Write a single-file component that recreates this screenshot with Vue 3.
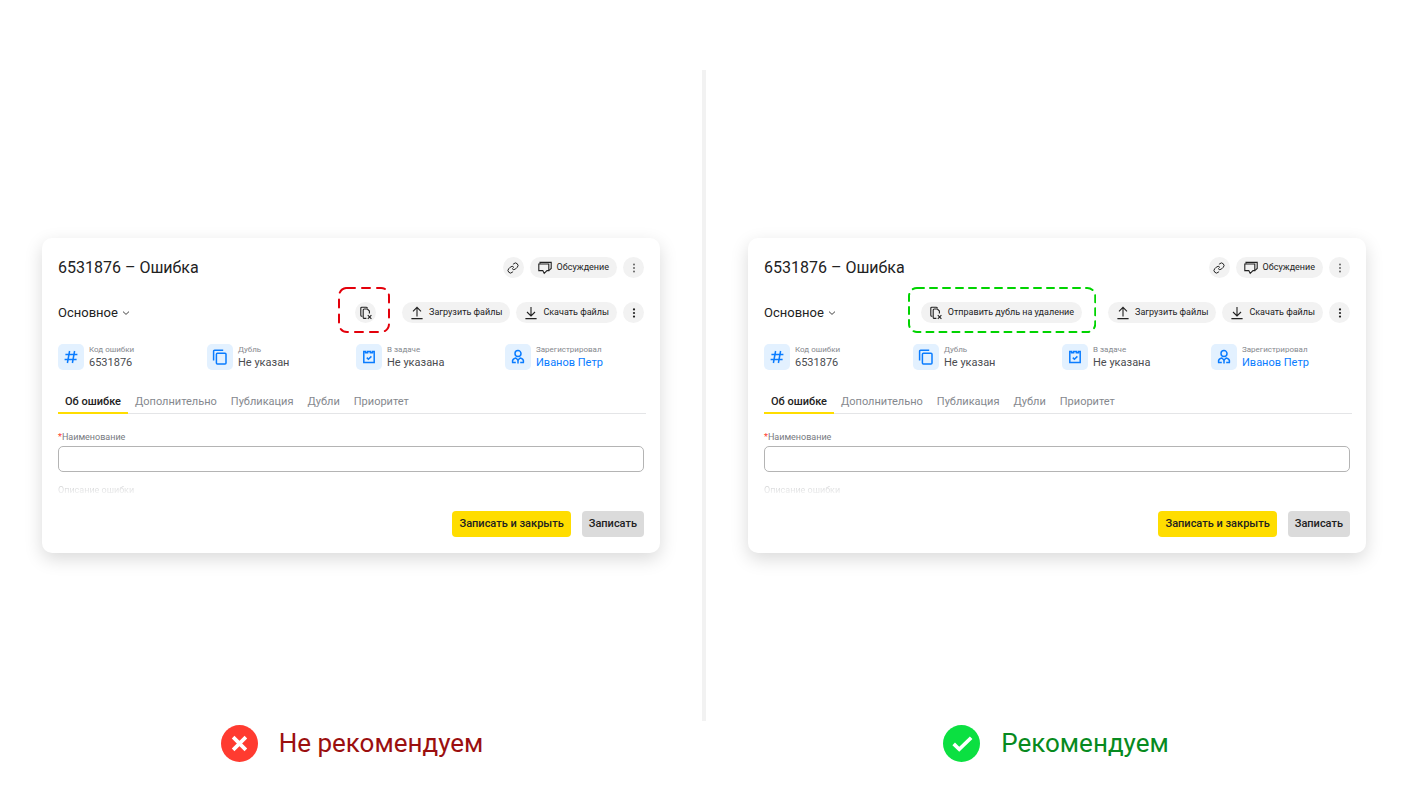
<template>
	<main class="page">
		<section v-for="panel in panels" :key="panel.id" class="column" :class="panel.id">
			<div class="stage">
				<article class="card">
					<header class="row">
						<h1 class="title">6531876 – Ошибка</h1>
						<div class="actions">
							<button class="pill pill-icon" aria-label="Скопировать ссылку">
								<svg class="icon icon-link" viewBox="0 0 24 24">
									<path d="M10 13a5 5 0 0 0 7.54.54l3-3a5 5 0 0 0-7.07-7.07l-1.72 1.71" />
									<path d="M14 11a5 5 0 0 0-7.54-.54l-3 3a5 5 0 0 0 7.07 7.07l1.71-1.71" />
								</svg>
							</button>
							<button class="pill">
								<svg class="icon" viewBox="0 0 14 14">
									<path d="M.8 3h10v6.6H9l-2.8 2.8-1.4-2.8h-4z" />
									<path d="M2 2.8V1.4h11.2v6l-2.2 2" />
								</svg>
								Обсуждение
							</button>
							<button class="pill pill-icon soft" aria-label="Ещё">
								<svg class="icon dots" viewBox="0 0 14 14">
									<circle cx="7" cy="3.4" r="1" /><circle cx="7" cy="7" r="1" /><circle cx="7" cy="10.6" r="1" />
								</svg>
							</button>
						</div>
					</header>

					<div class="row row-tools">
						<button class="section-select">
							Основное
							<svg class="chevron" viewBox="0 0 8 8"><path d="M1 2.6l3 2.8 3-2.8" /></svg>
						</button>
						<div class="actions">
							<div class="marked">
								<button class="pill" :class="{ 'pill-icon': !panel.action }" aria-label="Отправить дубль на удаление">
									<svg class="icon" viewBox="0 0 14 14">
										<path d="M3.4 10.200h-.6a1 1 0 0 1-1-1V2.200a1 1 0 0 1 1-1h4.600a1 1 0 0 1 1 1" />
										<path d="M7.400 12.400H5.200a1 1 0 0 1-1-1V4a1 1 0 0 1 1-1h3.200l2 2v2.600" />
										<path d="M8.800 9.200l3.600 3.600M12.400 9.200l-3.600 3.600" />
									</svg>
									<template v-if="panel.action">{{ panel.action }}</template>
								</button>
								<svg class="outline" aria-hidden="true"><rect x="1" y="1" rx="8" /></svg>
							</div>
							<button class="pill">
								<svg class="icon" viewBox="0 0 14 14">
									<path d="M1.4 12.6h11.2M7 10.4V1.6M3 5.4l4-4 4 4" />
								</svg>
								Загрузить файлы
							</button>
							<button class="pill">
								<svg class="icon" viewBox="0 0 14 14">
									<path d="M1.4 12.6h11.2M7 1v8.8M3 6l4 4 4-4" />
								</svg>
								Скачать файлы
							</button>
							<button class="pill pill-icon" aria-label="Ещё">
								<svg class="icon dots" viewBox="0 0 14 14">
									<circle cx="7" cy="3.4" r="1.1" /><circle cx="7" cy="7" r="1.1" /><circle cx="7" cy="10.6" r="1.1" />
								</svg>
							</button>
						</div>
					</div>

					<div class="facts">
						<div v-for="fact in facts" :key="fact.label" class="fact">
							<span class="fact-icon">
								<svg viewBox="0 0 16 16"><path v-for="d in fact.paths" :key="d" :d="d" /></svg>
							</span>
							<div class="fact-text">
								<span class="fact-label">{{ fact.label }}</span>
								<a v-if="fact.link" href="#" class="fact-value">{{ fact.value }}</a>
								<span v-else class="fact-value">{{ fact.value }}</span>
							</div>
						</div>
					</div>

					<nav class="tabs">
						<button
							v-for="tab in tabs"
							:key="tab"
							class="tab"
							:class="{ active: tab === activeTab[panel.id] }"
							@click="activeTab[panel.id] = tab"
						>
							{{ tab }}
						</button>
					</nav>

					<label class="label" :for="panel.id + '-name'"><span class="required">*</span>Наименование</label>
					<input :id="panel.id + '-name'" v-model="names[panel.id]" class="input" type="text">
					<p class="label label-faded">Описание ошибки</p>

					<footer class="footer">
						<button class="btn btn-primary">Записать и закрыть</button>
						<button class="btn">Записать</button>
					</footer>
				</article>
			</div>

			<div class="verdict">
				<svg class="verdict-icon" viewBox="0 0 36 36">
					<circle cx="18" cy="18" r="18" />
					<path :d="panel.mark" />
				</svg>
				{{ panel.verdict }}
			</div>
		</section>
	</main>
</template>

<script setup>
import { reactive } from 'vue'

const panels = [
	{ id: 'bad', verdict: 'Не рекомендуем', mark: 'M11.8 11.8l12.4 12.4M24.2 11.8L11.8 24.2' },
	{
		id: 'good',
		verdict: 'Рекомендуем',
		action: 'Отправить дубль на удаление',
		mark: 'M10.4 18.4l5.4 5.2L27.4 12.4',
	},
]

const facts = [
	{
		label: 'Код ошибки',
		value: '6531876',
		paths: ['M6.6 2L4.4 14M11.6 2L9.4 14M2.4 5.4h12M1.6 10.6h12'],
	},
	{
		label: 'Дубль',
		value: 'Не указан',
		paths: ['M1.6 11.4V2.2a1 1 0 0 1 1-1h8.6', 'M5.400 4.200h7.600a1 1 0 0 1 1 1v8.800a1 1 0 0 1-1 1H5.400a1 1 0 0 1-1-1V5.200a1 1 0 0 1 1-1z'],
	},
	{
		label: 'В задаче',
		value: 'Не указана',
		paths: ['M2.8 2.400h1.800v1.400h2v-1.400h2.800v1.400h2v-1.400h1.800v11.200H2.800z', 'M5.8 8.600l1.600 1.600 3-2.800'],
	},
	{
		label: 'Зарегистрировал',
		value: 'Иванов Петр',
		link: true,
		paths: [
			'M8 1.6a3 3 0 1 1 0 6 3 3 0 1 1 0-6z',
			'M5.800 13.400H2.600c-.4-2.400 1-4 3.200-4.400L8 11l2.200-2c2.200.4 3.600 2 3.200 4.400h-3.200',
			'M8 11v3.400',
		],
	},
]

const tabs = ['Об ошибке', 'Дополнительно', 'Публикация', 'Дубли', 'Приоритет']

const activeTab = reactive({ bad: tabs[0], good: tabs[0] })
const names = reactive({ bad: '', good: '' })
</script>

<style>
body { background: #fff; }
</style>

<style scoped>
.page {
	min-height: 100vh; box-sizing: border-box; padding: 70px 0 30px;
	display: grid; grid-template-columns: 1fr 1fr;
	font-family: Roboto, "Liberation Sans", sans-serif; color: #222;
}
button { font-family: inherit; color: inherit; border: none; margin: 0; cursor: pointer; }
svg { display: block; flex-shrink: 0; }

.column { display: flex; flex-direction: column; min-width: 0; }
.stage {
	flex: 1; display: flex; align-items: center;
	padding: 0 42px; border: 0 solid #f2f2f2;
}
.bad .stage { border-right-width: 2px; }
.good .stage { border-left-width: 2px; }
.card {
	flex: 1; min-width: 0; box-sizing: border-box; padding: 19px 16px 16px;
	background: #fff; border-radius: 10px;
	box-shadow: 0 6px 18px rgba(0, 0, 0, 0.15);
}

.row { display: flex; justify-content: space-between; align-items: center; }
.row-tools { margin-top: 24px; }
.title { margin: 0; font-size: 16px; line-height: 21px; font-weight: 400; }
.actions { display: flex; align-items: center; gap: 6px; }
.pill {
	height: 21px; padding: 0 8px; border-radius: 11px; background: #f2f2f2;
	display: flex; align-items: center; gap: 5px; font-size: 9px; line-height: 21px; white-space: nowrap;
}
.pill-icon { width: 21px; padding: 0; justify-content: center; }
.soft { color: #666; }
.icon { width: 14px; height: 14px; fill: none; stroke: currentColor; stroke-width: 1.1; }
.icon.dots { fill: currentColor; stroke: none; }
.icon-link { width: 12px; height: 12px; stroke-width: 2; }
.section-select {
	padding: 0; background: none; display: flex; align-items: center; gap: 4px;
	font-size: 13px; line-height: 21px;
}
.chevron { width: 8px; height: 8px; fill: none; stroke: #444; stroke-width: 1; }

/* пунктирная рамка вокруг кнопки */
.marked { position: relative; margin-right: 20px; }
.outline { position: absolute; top: -15px; left: -17px; width: calc(100% + 31px); height: 46px; pointer-events: none; }
.outline rect {
	width: calc(100% - 2px); height: calc(100% - 2px);
	fill: none; stroke: #e3000b; stroke-width: 2; stroke-linecap: round; stroke-dasharray: 8 7;
}
.good .outline { left: -13px; width: calc(100% + 27px); }
.good .outline rect { stroke: #00d300; stroke-dasharray: 7 6; }

.facts { margin-top: 21px; display: grid; grid-template-columns: repeat(4, 1fr); gap: 10px; }
.fact { display: flex; align-items: center; gap: 5px; }
.fact-icon {
	width: 26px; height: 26px; border-radius: 5px; background: #e3f1ff;
	display: flex; align-items: center; justify-content: center;
}
.fact-icon svg { width: 16px; height: 16px; fill: none; stroke: #0a7cff; stroke-width: 1.5; }
.fact-text { display: flex; flex-direction: column; white-space: nowrap; }
.fact-label { font-size: 8px; line-height: 12px; color: #85888e; }
.fact-value { font-size: 11px; line-height: 14px; color: #4a4c50; text-decoration: none; }
a.fact-value { color: #0a7cff; }

.tabs { margin: 19px -2px 0 0; display: flex; box-shadow: inset 0 -1px #e4e5e7; }
.tab {
	height: 25px; padding: 2px 7px 0; background: none; border-bottom: 2px solid transparent;
	font-size: 11px; line-height: 21px; color: #85888e;
}
.tab.active { color: #222; font-weight: 500; border-bottom-color: #fd0; }

.label { display: block; margin: 17px 0 2px; font-size: 9px; line-height: 13px; color: #777a80; }
.required { color: #ff3b30; }
.input {
	display: block; width: 100%; height: 26px; box-sizing: border-box; padding: 0 8px;
	border: 1px solid #b4b4b4; border-radius: 5px; background: #fff;
	font-family: inherit; font-size: 11px; color: inherit;
}
.label-faded {
	margin: 12px 0 0; color: transparent;
	background: linear-gradient(#c8c9cb, #fff); background-clip: text;
}

.footer { margin-top: 14px; display: flex; justify-content: flex-end; gap: 11px; }
.btn {
	height: 26px; padding: 0 7px; border-radius: 4px; background: #dbdbdb;
	font-size: 11px; line-height: 26px; font-weight: 500;
}
.btn-primary { background: #fd0; }

.verdict {
	margin-top: 4px; display: flex; align-items: center; justify-content: center; gap: 21px;
	font-size: 26px; line-height: 37px; color: #9b0f0f;
}
.verdict-icon { width: 37px; height: 37px; fill: #ff3b30; }
.verdict-icon path { fill: none; stroke: #fff; stroke-width: 3.6; }
.good .verdict { color: #078a20; }
.good .verdict-icon { fill: #0be041; }
</style>
